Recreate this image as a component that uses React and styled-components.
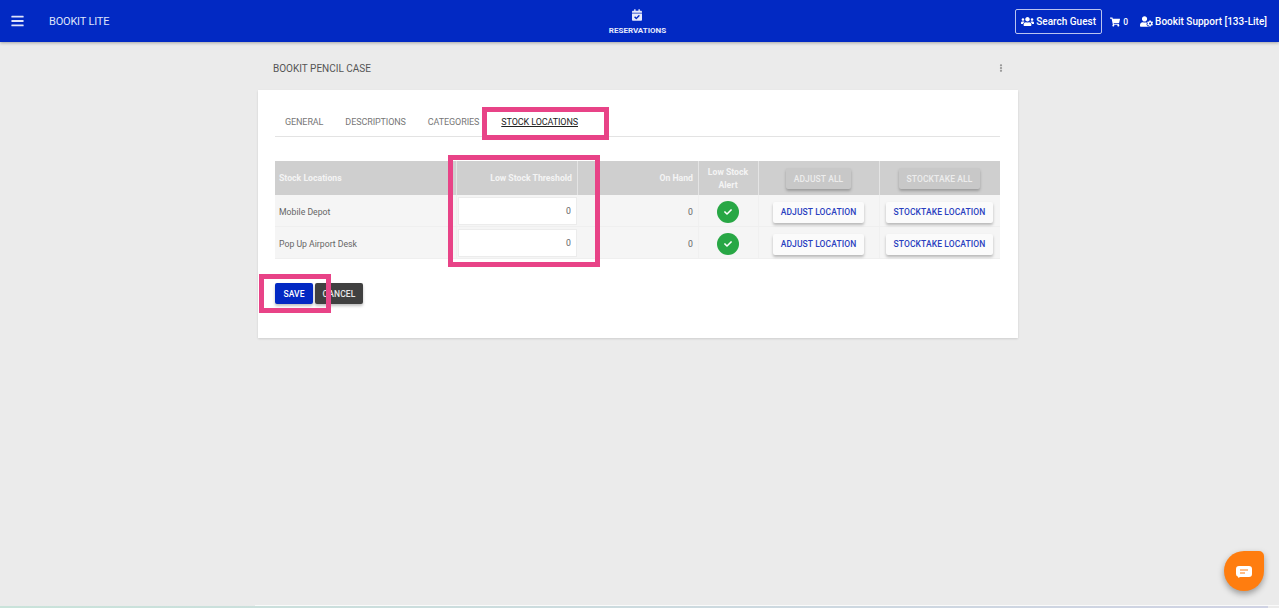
import React from "react";
import styled, { createGlobalStyle } from "styled-components";
import { FaBars, FaCalendarCheck, FaCheck, FaEllipsisV, FaShoppingCart, FaUserCog, FaUsers } from "react-icons/fa";

const GlobalStyle = createGlobalStyle`
  html, body {
    margin: 0;
    height: 100%;
    overflow: hidden;
    background: #ebebeb;
    font-family: Roboto, "Liberation Sans", sans-serif;
  }
  * {
    box-sizing: border-box;
  }
`;

const Page = styled.div`
  height: 608px;
  display: flex;
  flex-direction: column;
`;

const TopBar = styled.header`
  height: 42px;
  flex: none;
  display: grid;
  grid-template-columns: 1fr auto 1fr;
  align-items: center;
  padding: 0 12px 0 11px;
  background: #0229c3;
  color: #ffffff;
  box-shadow: 0 1px 3px rgba(0, 0, 0, 0.3);
`;

const Brand = styled.div`
  display: flex;
  align-items: center;
  gap: 25px;
  font-size: 11px;
  letter-spacing: -0.2px;
  color: #dfe4fa;
`;

const MenuIcon = styled(FaBars)`
  width: 13px;
  height: 14px;
`;

const NavItem = styled.div`
  display: flex;
  flex-direction: column;
  align-items: center;
  gap: 5px;
  padding-top: 2px;
  margin-right: 3px;
  font-size: 8px;
  font-weight: 700;
  color: #e6e9fb;
`;

const NavIcon = styled(FaCalendarCheck)`
  width: 10px;
  height: 12px;
`;

const Actions = styled.div`
  display: flex;
  align-items: center;
  justify-content: flex-end;
  font-size: 10px;
  font-weight: 500;
`;

const SearchButton = styled.button`
  display: flex;
  align-items: center;
  gap: 2px;
  width: 87px;
  height: 25px;
  padding: 0 5px;
  margin-right: 8px;
  border: 1px solid #b9c3ef;
  border-radius: 2px;
  background: transparent;
  color: #ffffff;
  font: 500 10px Roboto, sans-serif;
  white-space: nowrap;

  svg {
    flex: none;
  }
`;

const Cart = styled.div`
  display: flex;
  align-items: center;
  gap: 3px;
  margin-right: 12px;
  font-size: 8.5px;
  padding-top: 1px;
`;

const Account = styled.div`
  display: flex;
  align-items: center;
  gap: 2px;
  padding-top: 1px;
  white-space: nowrap;
`;

const Main = styled.main`
  flex: 1;
  width: 760px;
  margin-left: 258px;
`;

const TitleRow = styled.div`
  height: 48px;
  display: flex;
  align-items: center;
  justify-content: space-between;
  padding: 4px 14px 0 15px;
  font-size: 10px;
  color: #555555;
`;

const MoreIcon = styled(FaEllipsisV)`
  width: 6px;
  height: 8px;
  color: #9a9a9a;
`;

const Card = styled.section`
  position: relative;
  height: 248px;
  padding: 17px 18px 0 17px;
  background: #ffffff;
  box-shadow: 0 1px 2px rgba(0, 0, 0, 0.12);
`;

const Tabs = styled.nav`
  height: 30px;
  display: flex;
  align-items: center;
  padding: 1px 0 0 10px;
  border-bottom: 1px solid #e3e3e3;
`;

const Tab = styled.span`
  margin-right: ${({ $gap }) => $gap}px;
  font-size: 9px;
  letter-spacing: -0.1px;
  color: ${({ $active }) => ($active ? "#222222" : "#777777")};
  text-decoration: ${({ $active }) => ($active ? "underline" : "none")};
`;

const Table = styled.table`
  width: 725px;
  margin-top: 24px;
  table-layout: fixed;
  border-collapse: separate;
  border-spacing: 0;
  font-size: 8.7px;
`;

const Head = styled.th`
  height: 34px;
  padding: 1px 5px 0 4px;
  background: #cfcfcf;
  border-left: ${({ $plain }) => ($plain ? "none" : "1px solid #e4e4e4")};
  color: #f4f4f4;
  font-weight: 700;
  line-height: 13px;
  text-align: ${({ $align }) => $align || "center"};
`;

const Cell = styled.td`
  height: 32px;
  padding: 3px 5px 0 4px;
  background: #f5f5f5;
  border-bottom: 1px solid #efefef;
  border-left: ${({ $plain }) => ($plain ? "none" : "1px solid #f0f0f0")};
  color: #666666;
  text-align: ${({ $align }) => $align || "center"};
`;

const InputCell = styled(Cell)`
  padding: 2px 0 1px 1px;
`;

const NumberInput = styled.input`
  display: block;
  width: 119px;
  height: 28px;
  padding: 0 5px;
  border: 1px solid #ececec;
  background: #ffffff;
  color: #666666;
  font: 8.7px Roboto, sans-serif;
  text-align: right;
`;

const AlertDot = styled.span`
  display: inline-flex;
  align-items: center;
  justify-content: center;
  width: 22px;
  height: 22px;
  border-radius: 50%;
  background: #28a745;
  color: #ffffff;
  vertical-align: middle;
`;

const RaisedButton = styled.button`
  height: 21px;
  padding: 0 7.5px;
  border: none;
  border-radius: 2px;
  font: 500 8.5px Roboto, sans-serif;
  letter-spacing: 0.1px;
  white-space: nowrap;
  box-shadow: 0 2px 3px rgba(0, 0, 0, 0.25);
`;

const LightButton = styled(RaisedButton)`
  background: #fbfbfb;
  color: #2a3fc0;
`;

const MutedButton = styled(RaisedButton)`
  background: #c8c8c8;
  color: #ededed;
`;

const FormActions = styled.div`
  display: flex;
  gap: 2px;
  margin-top: 24px;
`;

const SaveButton = styled(RaisedButton)`
  width: 38px;
  padding: 0;
  background: #0229c3;
  color: #ffffff;
`;

const CancelButton = styled(RaisedButton)`
  width: 48px;
  padding: 0;
  background: #404040;
  color: #e8e8e8;
`;

// pink annotation frames drawn over the form
const Highlight = styled.div`
  position: absolute;
  left: ${({ $left }) => $left}px;
  top: ${({ $top }) => $top}px;
  width: ${({ $width }) => $width}px;
  height: ${({ $height }) => $height}px;
  border: 5px solid #e84387;
  pointer-events: none;
`;

const Footer = styled.footer`
  height: 3px;
  flex: none;
`;

const FooterEdge = styled.div`
  height: 1px;
  margin-left: 255px;
  background: #fafafa;
`;

const FooterStrip = styled.div`
  height: 2px;
  margin-right: 11px;
  background: linear-gradient(90deg, #c9e3da, #cfd2e3);
`;

const ChatBubble = styled.div`
  position: fixed;
  left: 1224px;
  top: 551px;
  width: 40px;
  height: 40px;
  padding-top: 1px;
  display: flex;
  align-items: center;
  justify-content: center;
  border-radius: 50% 5px 50% 50%;
  background: #ff7d0f;
  box-shadow: 0 3px 6px rgba(0, 0, 0, 0.35);
`;

const ChatIcon = () => (
  <svg width="16" height="12" viewBox="0 0 16 12">
    <path d="M3 0h10a3 3 0 0 1 3 3v5a3 3 0 0 1-3 3H4L2.5 12 2 10.8A3 3 0 0 1 0 8V3a3 3 0 0 1 3-3z" fill="#ffffff" />
    <path d="M4 4h8M4 7h5" stroke="#ff7d0f" strokeWidth="1.2" />
  </svg>
);

const locations = ["Mobile Depot", "Pop Up Airport Desk"];

export default function App() {
  return (
    <Page>
      <GlobalStyle />
      <TopBar>
        <Brand>
          <MenuIcon />
          BOOKIT LITE
        </Brand>
        <NavItem>
          <NavIcon />
          RESERVATIONS
        </NavItem>
        <Actions>
          <SearchButton>
            <FaUsers size={13} />
            Search Guest
          </SearchButton>
          <Cart>
            <FaShoppingCart size={10} />0
          </Cart>
          <Account>
            <FaUserCog size={13} />
            Bookit Support [133-Lite]
          </Account>
        </Actions>
      </TopBar>
      <Main>
        <TitleRow>
          BOOKIT PENCIL CASE
          <MoreIcon />
        </TitleRow>
        <Card>
          <Tabs>
            <Tab $gap={22}>GENERAL</Tab>
            <Tab $gap={22}>DESCRIPTIONS</Tab>
            <Tab $gap={22}>CATEGORIES</Tab>
            <Tab $active>STOCK LOCATIONS</Tab>
          </Tabs>
          <Table>
            <colgroup>
              <col width="181" />
              <col width="121" />
              <col width="121" />
              <col width="60" />
              <col width="121" />
              <col width="121" />
            </colgroup>
            <thead>
              <tr>
                <Head $plain $align="left">Stock Locations</Head>
                <Head $align="right">Low Stock Threshold</Head>
                <Head $align="right">On Hand</Head>
                <Head>Low Stock Alert</Head>
                <Head>
                  <MutedButton>ADJUST ALL</MutedButton>
                </Head>
                <Head>
                  <MutedButton>STOCKTAKE ALL</MutedButton>
                </Head>
              </tr>
            </thead>
            <tbody>
              {locations.map((name) => (
                <tr key={name}>
                  <Cell $plain $align="left">{name}</Cell>
                  <InputCell>
                    <NumberInput readOnly value="0" />
                  </InputCell>
                  <Cell $plain $align="right">0</Cell>
                  <Cell>
                    <AlertDot>
                      <FaCheck size={8} />
                    </AlertDot>
                  </Cell>
                  <Cell>
                    <LightButton>ADJUST LOCATION</LightButton>
                  </Cell>
                  <Cell>
                    <LightButton>STOCKTAKE LOCATION</LightButton>
                  </Cell>
                </tr>
              ))}
            </tbody>
          </Table>
          <FormActions>
            <SaveButton>SAVE</SaveButton>
            <CancelButton>CANCEL</CancelButton>
          </FormActions>
          <Highlight $left={224} $top={17} $width={127} $height={33} />
          <Highlight $left={190} $top={65} $width={152} $height={112} />
          <Highlight $left={1} $top={184} $width={72} $height={39} />
        </Card>
      </Main>
      <Footer>
        <FooterEdge />
        <FooterStrip />
      </Footer>
      <ChatBubble>
        <ChatIcon />
      </ChatBubble>
    </Page>
  );
}
